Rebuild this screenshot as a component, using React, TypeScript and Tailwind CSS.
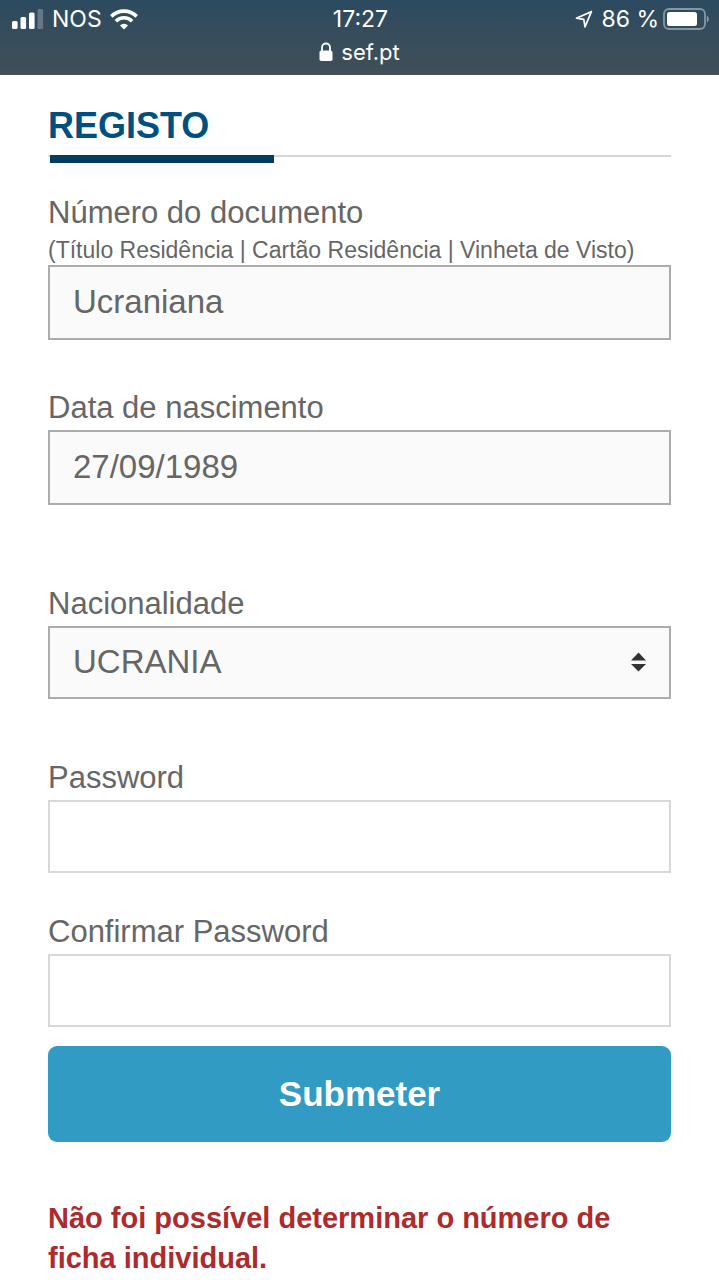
import { useState } from 'react';
import type { FormEvent } from 'react';

const labelClass = 'block text-[31px] leading-9 mb-1';
const filledClass = 'block w-full px-[23px] pb-[2px] text-[33px] bg-[#fafafa] border-2 border-[#acacac] rounded-none outline-none';
const passwordClass = 'block w-full h-[73px] px-[23px] text-[33px] bg-white border-2 border-[#d8d8d8] rounded-none outline-none';

function SignalIcon() {
    return (
        <svg className="w-8 h-5" viewBox="0 0 32 20" fill="currentColor" aria-hidden="true">
            <rect x="0" y="12" width="5.6" height="8" rx="1.5" />
            <rect x="8.5" y="8" width="5.6" height="12" rx="1.5" />
            <rect x="17" y="3.5" width="5.6" height="16.5" rx="1.5" />
            <rect x="25.5" y="0" width="5.6" height="20" rx="1.5" opacity="0.25" />
        </svg>
    );
}

function WifiIcon() {
    return (
        <svg className="w-7 h-[21px]" viewBox="0 0 28 21" fill="none" stroke="currentColor" strokeWidth="3.6" aria-hidden="true">
            <path d="M1.3 7.4a18 18 0 0 1 25.4 0" />
            <path d="M5.9 12.2a11.4 11.4 0 0 1 16.2 0" />
            <path d="M9.9 16.4a5.8 5.8 0 0 1 8.2 0L14 20.6z" fill="currentColor" stroke="none" />
        </svg>
    );
}

function LocationIcon() {
    return (
        <svg className="w-[18px] h-5" viewBox="0 0 18 20" fill="none" stroke="currentColor" strokeWidth="1.7" strokeLinejoin="round" aria-hidden="true">
            <path d="M16.4 2.6 1.4 9.2l7.4 1.2 1.2 7.4z" />
        </svg>
    );
}

function BatteryIcon() {
    return (
        <svg className="w-[46px] h-[22px]" viewBox="0 0 46 22" aria-hidden="true">
            <rect x="1" y="1" width="41" height="20" rx="5" fill="none" stroke="#8497a3" strokeWidth="1.8" />
            <rect x="4" y="4" width="30" height="14" rx="2.5" fill="#fff" />
            <path d="M43.8 7.5a4 4 0 0 1 0 7z" fill="#8497a3" />
        </svg>
    );
}

function LockIcon() {
    return (
        <svg className="w-[14px] h-5" viewBox="0 0 14 20" aria-hidden="true">
            <path d="M3 10V5.5a4 4 0 0 1 8 0V10" fill="none" stroke="currentColor" strokeWidth="1.8" />
            <rect x="0.5" y="8.5" width="13" height="10.5" rx="1.8" fill="currentColor" />
        </svg>
    );
}

function StatusBar() {
    return (
        <header className="h-[75px] bg-linear-to-b from-[#2c4a60] to-[#414f57] text-white font-[Inter,sans-serif] text-[23px]">
            <div className="grid grid-cols-3 items-center h-[38px] pl-3 pr-[10px]">
                <div className="flex items-center gap-2">
                    <SignalIcon />
                    <span>NOS</span>
                    <WifiIcon />
                </div>
                <div className="text-center">17:27</div>
                <div className="flex items-center justify-end gap-1">
                    <LocationIcon />
                    <span className="ml-1 whitespace-nowrap">86 %</span>
                    <BatteryIcon />
                </div>
            </div>
            <div className="flex items-center justify-center gap-2 leading-7 text-[22px]">
                <LockIcon />
                <span>sef.pt</span>
            </div>
        </header>
    );
}

export default function App() {
    const [documento, setDocumento] = useState('Ucraniana');
    const [nascimento, setNascimento] = useState('27/09/1989');
    const [nacionalidade, setNacionalidade] = useState('UCRANIA');
    const [password, setPassword] = useState('');
    const [confirmar, setConfirmar] = useState('');

    const handleSubmit = (e: FormEvent) => {
        e.preventDefault();
    };

    return (
        <div className="bg-white text-[#666] font-['Liberation_Sans',Arial,sans-serif]">
            <StatusBar />

            <main className="px-12 pt-[27px]">
                <div className="relative border-b-2 border-[#d8d8d8] pb-[5px]">
                    <h1 className="text-[36px] leading-[48px] font-bold text-[#00507f]">REGISTO</h1>
                    <div className="absolute left-[2px] top-full w-56 h-2 bg-[#023f5f]" />
                </div>

                <form onSubmit={handleSubmit} className="pt-[38px]">
                    <div>
                        <label htmlFor="documento" className={labelClass}>Número do documento</label>
                        <p className="text-[23px] leading-[30px] whitespace-nowrap">(Título Residência | Cartão Residência | Vinheta de Visto)</p>
                        <input id="documento" type="text" value={documento} onChange={(e) => setDocumento(e.target.value)} className={`${filledClass} h-[75px]`} />
                    </div>

                    <div className="mt-[50px]">
                        <label htmlFor="nascimento" className={labelClass}>Data de nascimento</label>
                        <input id="nascimento" type="text" value={nascimento} onChange={(e) => setNascimento(e.target.value)} className={`${filledClass} h-[75px]`} />
                    </div>

                    <div className="mt-[81px]">
                        <label htmlFor="nacionalidade" className={labelClass}>Nacionalidade</label>
                        <div className="relative">
                            <select id="nacionalidade" value={nacionalidade} onChange={(e) => setNacionalidade(e.target.value)} className={`${filledClass} h-[73px] appearance-none`}>
                                <option value="UCRANIA">UCRANIA</option>
                            </select>
                            <svg className="absolute right-6 top-[26px] w-4 h-5 pointer-events-none" viewBox="0 0 16 20" fill="#333" aria-hidden="true">
                                <path d="M7.5 0.5 15 8.5H0z" />
                                <path d="M7.5 19.5 0 12H15z" />
                            </svg>
                        </div>
                    </div>

                    <div className="mt-[61px]">
                        <label htmlFor="password" className={labelClass}>Password</label>
                        <input id="password" type="password" value={password} onChange={(e) => setPassword(e.target.value)} className={passwordClass} />
                    </div>

                    <div className="mt-[41px]">
                        <label htmlFor="confirmar" className={labelClass}>Confirmar Password</label>
                        <input id="confirmar" type="password" value={confirmar} onChange={(e) => setConfirmar(e.target.value)} className={passwordClass} />
                    </div>

                    <button type="submit" className="block w-full h-24 mt-[19px] rounded-[9px] bg-[#329bc4] text-white text-[35px] font-bold">
                        Submeter
                    </button>

                    <p role="alert" className="mt-14 text-[29px] leading-10 font-bold text-[#ad2a2d]">
                        Não foi possível determinar o número de ficha individual.
                    </p>
                </form>
            </main>
        </div>
    );
}
